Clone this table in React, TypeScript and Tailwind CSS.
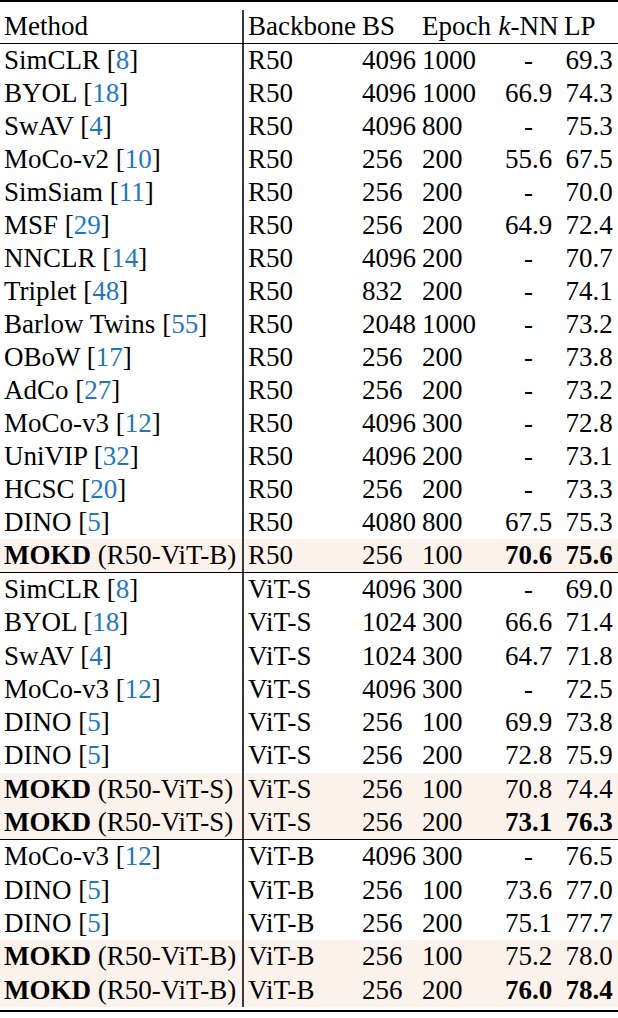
type Row = {
  name: string;
  cite?: string;
  variant?: string;
  backbone: string;
  bs: string;
  epoch: string;
  knn: string;
  lp: string;
  best?: boolean;
  ours?: boolean;
};

const r50: Row[] = [
  { name: "SimCLR", cite: "8", backbone: "R50", bs: "4096", epoch: "1000", knn: "-", lp: "69.3" },
  { name: "BYOL", cite: "18", backbone: "R50", bs: "4096", epoch: "1000", knn: "66.9", lp: "74.3" },
  { name: "SwAV", cite: "4", backbone: "R50", bs: "4096", epoch: "800", knn: "-", lp: "75.3" },
  { name: "MoCo-v2", cite: "10", backbone: "R50", bs: "256", epoch: "200", knn: "55.6", lp: "67.5" },
  { name: "SimSiam", cite: "11", backbone: "R50", bs: "256", epoch: "200", knn: "-", lp: "70.0" },
  { name: "MSF", cite: "29", backbone: "R50", bs: "256", epoch: "200", knn: "64.9", lp: "72.4" },
  { name: "NNCLR", cite: "14", backbone: "R50", bs: "4096", epoch: "200", knn: "-", lp: "70.7" },
  { name: "Triplet", cite: "48", backbone: "R50", bs: "832", epoch: "200", knn: "-", lp: "74.1" },
  { name: "Barlow Twins", cite: "55", backbone: "R50", bs: "2048", epoch: "1000", knn: "-", lp: "73.2" },
  { name: "OBoW", cite: "17", backbone: "R50", bs: "256", epoch: "200", knn: "-", lp: "73.8" },
  { name: "AdCo", cite: "27", backbone: "R50", bs: "256", epoch: "200", knn: "-", lp: "73.2" },
  { name: "MoCo-v3", cite: "12", backbone: "R50", bs: "4096", epoch: "300", knn: "-", lp: "72.8" },
  { name: "UniVIP", cite: "32", backbone: "R50", bs: "4096", epoch: "200", knn: "-", lp: "73.1" },
  { name: "HCSC", cite: "20", backbone: "R50", bs: "256", epoch: "200", knn: "-", lp: "73.3" },
  { name: "DINO", cite: "5", backbone: "R50", bs: "4080", epoch: "800", knn: "67.5", lp: "75.3" },
  { name: "MOKD", variant: "(R50-ViT-B)", backbone: "R50", bs: "256", epoch: "100", knn: "70.6", lp: "75.6", best: true, ours: true },
];

const vitS: Row[] = [
  { name: "SimCLR", cite: "8", backbone: "ViT-S", bs: "4096", epoch: "300", knn: "-", lp: "69.0" },
  { name: "BYOL", cite: "18", backbone: "ViT-S", bs: "1024", epoch: "300", knn: "66.6", lp: "71.4" },
  { name: "SwAV", cite: "4", backbone: "ViT-S", bs: "1024", epoch: "300", knn: "64.7", lp: "71.8" },
  { name: "MoCo-v3", cite: "12", backbone: "ViT-S", bs: "4096", epoch: "300", knn: "-", lp: "72.5" },
  { name: "DINO", cite: "5", backbone: "ViT-S", bs: "256", epoch: "100", knn: "69.9", lp: "73.8" },
  { name: "DINO", cite: "5", backbone: "ViT-S", bs: "256", epoch: "200", knn: "72.8", lp: "75.9" },
  { name: "MOKD", variant: "(R50-ViT-S)", backbone: "ViT-S", bs: "256", epoch: "100", knn: "70.8", lp: "74.4", ours: true },
  { name: "MOKD", variant: "(R50-ViT-S)", backbone: "ViT-S", bs: "256", epoch: "200", knn: "73.1", lp: "76.3", best: true, ours: true },
];

const vitB: Row[] = [
  { name: "MoCo-v3", cite: "12", backbone: "ViT-B", bs: "4096", epoch: "300", knn: "-", lp: "76.5" },
  { name: "DINO", cite: "5", backbone: "ViT-B", bs: "256", epoch: "100", knn: "73.6", lp: "77.0" },
  { name: "DINO", cite: "5", backbone: "ViT-B", bs: "256", epoch: "200", knn: "75.1", lp: "77.7" },
  { name: "MOKD", variant: "(R50-ViT-B)", backbone: "ViT-B", bs: "256", epoch: "100", knn: "75.2", lp: "78.0", ours: true },
  { name: "MOKD", variant: "(R50-ViT-B)", backbone: "ViT-B", bs: "256", epoch: "200", knn: "76.0", lp: "78.4", best: true, ours: true },
];

const cols = "grid grid-cols-[244px_118px_60px_75px_63px_58px] items-center";

function DataRow({ row, h }: { row: Row; h: string }) {
  return (
    <div className={`${cols} ${h} ${row.ours ? "bg-[#fcf2ec]" : ""}`}>
      <div className="h-full flex items-center pl-1 border-r-2 border-[#3a3a3a] whitespace-nowrap">
        {row.ours ? (
          <span>
            <b>{row.name}</b> {row.variant}
          </span>
        ) : (
          <span>
            {row.name} [<span className="text-[#1f77bf]">{row.cite}</span>]
          </span>
        )}
      </div>
      <div className="pl-1">{row.backbone}</div>
      <div>{row.bs}</div>
      <div>{row.epoch}</div>
      <div className={`text-center ${row.best ? "font-bold" : ""}`}>{row.knn}</div>
      <div className={`text-center ${row.best ? "font-bold" : ""}`}>{row.lp}</div>
    </div>
  );
}

export default function App() {
  return (
    <div className="w-[618px] h-[1018px] bg-white text-black text-[27px] leading-none font-['Liberation_Serif','Times_New_Roman',serif]">
      {/* top rule */}
      <div className="h-[2px] bg-black" />
      <div className={`${cols} h-[41px]`}>
        <div className="h-[33px] self-end flex items-center pl-1 border-r-2 border-[#3a3a3a]">Method</div>
        <div className="pl-1 self-end h-[33px] flex items-center">Backbone</div>
        <div className="self-end h-[33px] flex items-center">BS</div>
        <div className="self-end h-[33px] flex items-center">Epoch</div>
        <div className="self-end h-[33px] flex items-center justify-center whitespace-nowrap">
          <i>k</i>-NN
        </div>
        <div className="self-end h-[33px] flex items-center pl-1">LP</div>
      </div>
      <div className="h-px bg-black" />
      {r50.map((r, i) => (
        <DataRow key={"a" + i} row={r} h="h-[33px]" />
      ))}
      <div className="h-px bg-black" />
      {vitS.map((r, i) => (
        <DataRow key={"b" + i} row={r} h="h-[33.25px]" />
      ))}
      <div className="h-px bg-black" />
      {vitB.map((r, i) => (
        <DataRow key={"c" + i} row={r} h="h-[33.4px]" />
      ))}
      <div className="h-[3px]" />
      {/* bottom rule */}
      <div className="h-[2px] bg-black" />
    </div>
  );
}
